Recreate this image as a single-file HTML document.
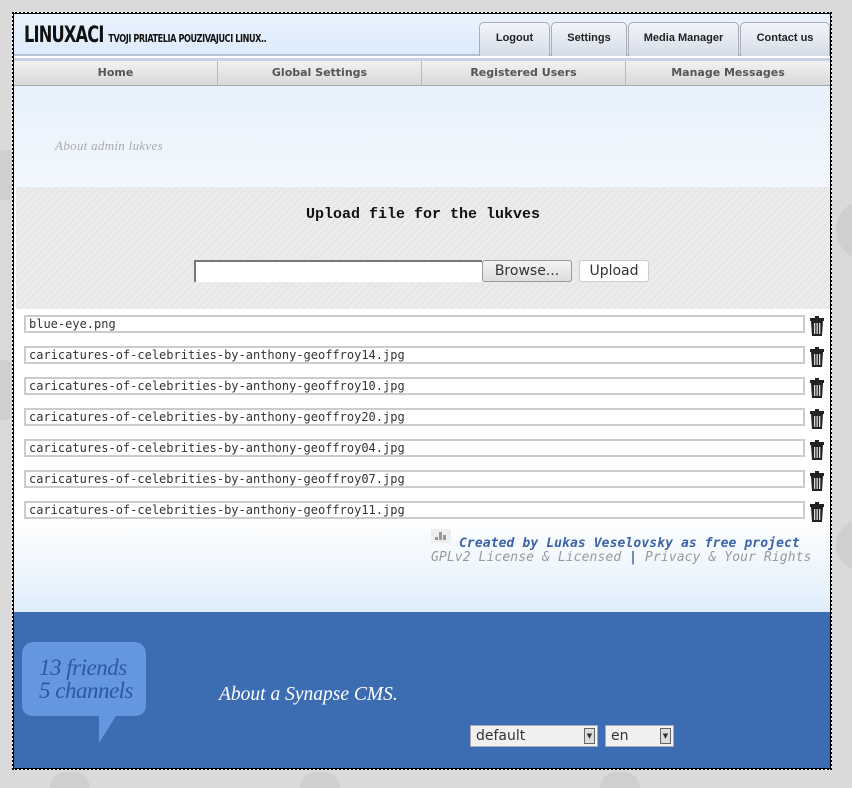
<!DOCTYPE html>
<html style="overflow:hidden;height:788px"><head><meta charset="utf-8"><style>
*{box-sizing:border-box;margin:0;padding:0}
body{width:852px;height:788px;background:#dadada;position:relative;overflow:hidden;font-family:"Liberation Sans",sans-serif}
.c{position:absolute;border-radius:50%;background:#cfcfcf}
#w{position:absolute;left:12px;top:12px;width:820px;height:758px;border:2px dotted #000;outline:1px solid #000;outline-offset:-2px;background:#fff;overflow:hidden}
#hd{position:absolute;left:0;top:0;width:816px;height:42px;background:linear-gradient(#eaf3fd,#dcebfb);border-bottom:2px solid #b8c4d6}
#logo{position:absolute;left:10px;top:9px;font-family:"DejaVu Sans Condensed","Liberation Sans Narrow",sans-serif;font-weight:bold;font-size:22px;color:#111;letter-spacing:-1px;transform:scaleX(.82);transform-origin:left}
#logo small{font-size:11px;letter-spacing:-.5px}
.tab{position:absolute;top:8px;height:34px;border:1px solid #aab;border-bottom:none;border-radius:5px 5px 0 0;background:linear-gradient(#f2f5fa,#d6dde8);font:bold 11px "Liberation Sans",sans-serif;color:#222;text-align:center;line-height:30px}
#nav{position:absolute;left:0;top:44px;width:816px;height:28px;background:linear-gradient(#f2f2f2,#d8d8d8);border-top:3px solid #c6d2e6;border-bottom:1px solid #aaa}
#nav div{position:absolute;top:0;height:24px;width:204px;text-align:center;font:bold 11px "DejaVu Sans",sans-serif;color:#555;line-height:24px;border-right:1px solid #bbb}
#hero{position:absolute;left:0;top:72px;width:816px;height:101px;background:linear-gradient(#e6f1fc,#f3f8fe)}
#hero span{position:absolute;left:41px;top:52px;font:italic 13px "Liberation Serif",serif;color:#aaa;letter-spacing:.3px}
#up{position:absolute;left:2px;top:173px;width:814px;height:122px;background:repeating-linear-gradient(135deg,#ececec 0 3px,#e6e6e6 3px 5px)}
#up h3{position:absolute;left:0;width:100%;top:19px;text-align:center;font:bold 15px "Liberation Mono",monospace;color:#111}
.row{position:absolute;left:10px;width:781px;height:18px;border:2px solid #ccc;font:12px "DejaVu Sans Mono",monospace;color:#333;line-height:14px;padding-left:3px;background:#fff}
.tr{position:absolute;left:795px;width:16px;height:20px}
#grad{position:absolute;left:0;top:505px;width:816px;height:95px;background:linear-gradient(#fff,#dfeefb)}
#ft{position:absolute;left:0;top:598px;width:816px;height:156px;background:#3c6db3}
.sel{position:absolute;top:711px;height:22px;background:#f0f0f0;border:1px solid #aab;font:14px "DejaVu Sans",sans-serif;color:#333;line-height:20px;padding-left:5px}
.sel i{position:absolute;right:2px;top:2px;width:11px;height:16px;background:#ddd;border:1px solid #666;font-style:normal;font-size:7px;line-height:14px;text-align:center}
</style></head><body>
<div class="c" style="left:-20px;top:150px;width:50px;height:50px"></div>
<div class="c" style="left:-30px;top:360px;width:60px;height:60px"></div>
<div class="c" style="left:836px;top:200px;width:60px;height:60px"></div>
<div class="c" style="left:836px;top:520px;width:50px;height:50px"></div>
<div class="c" style="left:50px;top:772px;width:40px;height:16px;border-radius:20px 20px 0 0"></div>
<div class="c" style="left:300px;top:772px;width:40px;height:16px;border-radius:20px 20px 0 0"></div>
<div class="c" style="left:600px;top:772px;width:40px;height:16px;border-radius:20px 20px 0 0"></div>
<div id="w">
<div id="hd"><div id="logo">LINUXACI <small>TVOJI PRIATELIA POUZIVAJUCI LINUX..</small></div>
<div class="tab" style="left:465px;width:71px">Logout</div>
<div class="tab" style="left:537px;width:76px">Settings</div>
<div class="tab" style="left:614px;width:111px">Media Manager</div>
<div class="tab" style="left:726px;width:90px">Contact us</div></div>
<div id="nav"><div style="left:0">Home</div><div style="left:204px">Global Settings</div><div style="left:408px">Registered Users</div><div style="left:612px;border:none">Manage Messages</div></div>
<div id="hero"><span>About admin lukves</span></div>
<div id="up"><h3>Upload file for the lukves</h3>
<div style="position:absolute;left:178px;top:73px;width:288px;height:22px;background:#fff;border-top:2px solid #777;border-left:2px solid #777"></div>
<div style="position:absolute;left:466px;top:73px;width:90px;height:22px;border:1px solid #999;border-radius:3px;background:linear-gradient(#f4f4f4,#ddd);font:14px 'DejaVu Sans',sans-serif;color:#333;text-align:center;line-height:20px">Browse...</div>
<div style="position:absolute;left:563px;top:73px;width:70px;height:22px;border:1px solid #ccc;border-radius:3px;background:#fff;font:14px 'DejaVu Sans',sans-serif;color:#333;text-align:center;line-height:20px">Upload</div></div>
<div id="grad"></div>
<div class="row" style="top:301px">blue-eye.png</div>
<div class="row" style="top:332px">caricatures-of-celebrities-by-anthony-geoffroy14.jpg</div>
<div class="row" style="top:363px">caricatures-of-celebrities-by-anthony-geoffroy10.jpg</div>
<div class="row" style="top:394px">caricatures-of-celebrities-by-anthony-geoffroy20.jpg</div>
<div class="row" style="top:425px">caricatures-of-celebrities-by-anthony-geoffroy04.jpg</div>
<div class="row" style="top:456px">caricatures-of-celebrities-by-anthony-geoffroy07.jpg</div>
<div class="row" style="top:487px">caricatures-of-celebrities-by-anthony-geoffroy11.jpg</div>
<svg width="0" height="0" style="position:absolute"><defs><g id="t"><rect x="6" y="0" width="4" height="2" fill="#222"/><rect x="1" y="2" width="14" height="3" fill="#222"/><path d="M2 5h12l-1 15H3z" fill="#222"/><rect x="5" y="7" width="1.3" height="11" fill="#ddd"/><rect x="7.5" y="7" width="1.3" height="11" fill="#ddd"/><rect x="10" y="7" width="1.3" height="11" fill="#ddd"/></g></defs></svg>
<svg class="tr" style="top:302px" viewBox="0 0 16 20"><use href="#t"/></svg>
<svg class="tr" style="top:333px" viewBox="0 0 16 20"><use href="#t"/></svg>
<svg class="tr" style="top:364px" viewBox="0 0 16 20"><use href="#t"/></svg>
<svg class="tr" style="top:395px" viewBox="0 0 16 20"><use href="#t"/></svg>
<svg class="tr" style="top:426px" viewBox="0 0 16 20"><use href="#t"/></svg>
<svg class="tr" style="top:457px" viewBox="0 0 16 20"><use href="#t"/></svg>
<svg class="tr" style="top:488px" viewBox="0 0 16 20"><use href="#t"/></svg>
<div style="position:absolute;left:417px;top:515px;width:20px;height:14px;background:#eee"><div style="position:absolute;left:4px;top:8px;width:3px;height:3px;background:#999"></div><div style="position:absolute;left:8px;top:3px;width:3px;height:8px;background:#999"></div><div style="position:absolute;left:12px;top:6px;width:3px;height:5px;background:#999"></div></div>
<div style="position:absolute;left:445px;top:522px;font:italic bold 13px 'DejaVu Sans Mono',monospace;color:#3b62a8;letter-spacing:.1px">Created by Lukas Veselovsky as free project</div>
<div style="position:absolute;left:417px;top:536px;font:italic 13px 'DejaVu Sans Mono',monospace;color:#999;letter-spacing:.1px">GPLv2 License &amp; Licensed <b style="color:#3b62a8">|</b> Privacy &amp; Your Rights</div>
<div id="ft">
<svg style="position:absolute;left:6px;top:30px" width="130" height="102" viewBox="0 0 130 102"><path d="M14 0h100q12 0 12 14v48q0 12-12 12H96L79 101V74H14Q2 74 2 62V14Q2 0 14 0z" fill="#6497de"/></svg>
<div style="position:absolute;left:25px;top:44px;font:italic 23px/23px 'Liberation Serif',serif;color:#2f57a0;letter-spacing:-.5px">13 friends<br>5 channels</div>
<div style="position:absolute;left:205px;top:72px;font:italic 19.5px 'Liberation Serif',serif;color:#fff">About a Synapse CMS.</div>
</div>
<div class="sel" style="left:456px;width:128px">default<i>▼</i></div>
<div class="sel" style="left:591px;width:69px">en<i>▼</i></div>
</div>
</body></html>
